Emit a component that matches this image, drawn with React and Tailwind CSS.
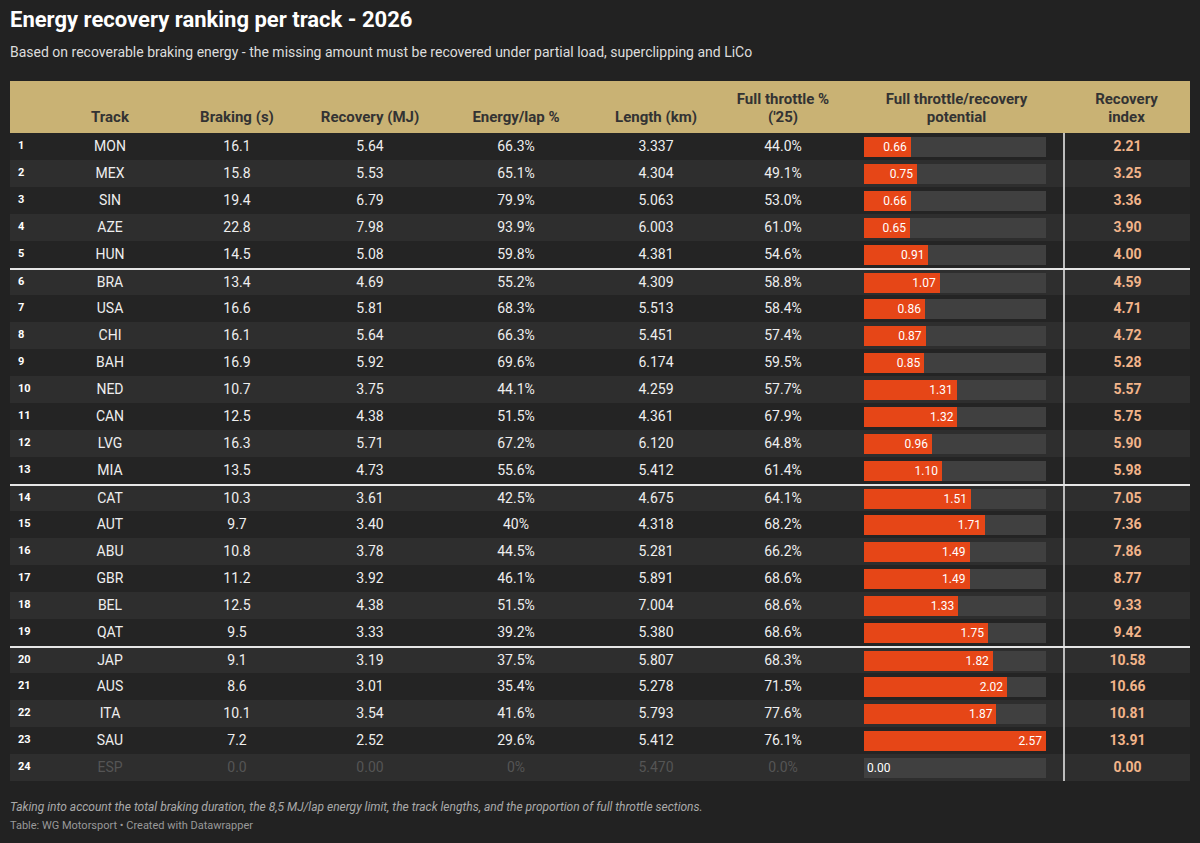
import React from "react";

const rows = [
  [1, "MON", "16.1", "5.64", "66.3%", "3.337", "44.0%", 0.66, "2.21"],
  [2, "MEX", "15.8", "5.53", "65.1%", "4.304", "49.1%", 0.75, "3.25"],
  [3, "SIN", "19.4", "6.79", "79.9%", "5.063", "53.0%", 0.66, "3.36"],
  [4, "AZE", "22.8", "7.98", "93.9%", "6.003", "61.0%", 0.65, "3.90"],
  [5, "HUN", "14.5", "5.08", "59.8%", "4.381", "54.6%", 0.91, "4.00"],
  [6, "BRA", "13.4", "4.69", "55.2%", "4.309", "58.8%", 1.07, "4.59"],
  [7, "USA", "16.6", "5.81", "68.3%", "5.513", "58.4%", 0.86, "4.71"],
  [8, "CHI", "16.1", "5.64", "66.3%", "5.451", "57.4%", 0.87, "4.72"],
  [9, "BAH", "16.9", "5.92", "69.6%", "6.174", "59.5%", 0.85, "5.28"],
  [10, "NED", "10.7", "3.75", "44.1%", "4.259", "57.7%", 1.31, "5.57"],
  [11, "CAN", "12.5", "4.38", "51.5%", "4.361", "67.9%", 1.32, "5.75"],
  [12, "LVG", "16.3", "5.71", "67.2%", "6.120", "64.8%", 0.96, "5.90"],
  [13, "MIA", "13.5", "4.73", "55.6%", "5.412", "61.4%", 1.1, "5.98"],
  [14, "CAT", "10.3", "3.61", "42.5%", "4.675", "64.1%", 1.51, "7.05"],
  [15, "AUT", "9.7", "3.40", "40%", "4.318", "68.2%", 1.71, "7.36"],
  [16, "ABU", "10.8", "3.78", "44.5%", "5.281", "66.2%", 1.49, "7.86"],
  [17, "GBR", "11.2", "3.92", "46.1%", "5.891", "68.6%", 1.49, "8.77"],
  [18, "BEL", "12.5", "4.38", "51.5%", "7.004", "68.6%", 1.33, "9.33"],
  [19, "QAT", "9.5", "3.33", "39.2%", "5.380", "68.6%", 1.75, "9.42"],
  [20, "JAP", "9.1", "3.19", "37.5%", "5.807", "68.3%", 1.82, "10.58"],
  [21, "AUS", "8.6", "3.01", "35.4%", "5.278", "71.5%", 2.02, "10.66"],
  [22, "ITA", "10.1", "3.54", "41.6%", "5.793", "77.6%", 1.87, "10.81"],
  [23, "SAU", "7.2", "2.52", "29.6%", "5.412", "76.1%", 2.57, "13.91"],
  [24, "ESP", "0.0", "0.00", "0%", "5.470", "0.0%", 0, "0.00"],
];

const grid =
  "grid grid-cols-[40px_120px_134px_132px_160px_120px_134px_213px_127px]";

function Row({ r }) {
  const [rank, track, brake, rec, energy, len, ft, pot, idx] = r;
  const odd = rank % 2 === 1;
  const sep = rank === 6 || rank === 14 || rank === 20;
  const dim = rank === 24;
  const txt = dim ? "text-[#555555]" : "text-[#eeeeee]";
  const w = (pot / 2.57) * 182;
  return (
    <div
      className={`${grid} h-[27px] items-stretch text-[14px] ${
        odd ? "bg-[#242424]" : "bg-[#2e2e2e]"
      } ${sep ? "border-t-2 border-[#e6e6e6]" : ""}`}
    >
      <div className="flex items-center pl-[8px] text-[11px] font-bold text-white">
        {rank}
      </div>
      <div className={`flex items-center justify-center ${txt}`}>{track}</div>
      <div className={`flex items-center justify-center ${txt}`}>{brake}</div>
      <div className={`flex items-center justify-center ${txt}`}>{rec}</div>
      <div className={`flex items-center justify-center ${txt}`}>{energy}</div>
      <div className={`flex items-center justify-center ${txt}`}>{len}</div>
      <div className={`flex items-center justify-center ${txt}`}>{ft}</div>
      <div className="flex items-center pl-[14px]">
        <div className="relative h-[20px] w-[182px] bg-[#404040]">
          {pot > 0 ? (
            <div
              className="flex h-full items-center justify-end bg-[#e64617] pr-[4px] text-[12px] text-white"
              style={{ width: `${w}px` }}
            >
              {pot.toFixed(2)}
            </div>
          ) : (
            <div className="flex h-full items-center pl-[3px] text-[12px] text-white">
              0.00
            </div>
          )}
        </div>
      </div>
      <div className="flex items-center justify-center border-l-2 border-[#bdbdbd] text-[14px] font-bold text-[#f2b48a]">
        {idx}
      </div>
    </div>
  );
}

export default function App() {
  return (
    <div
      className="min-h-[843px] w-[1200px] bg-[#222222] px-[10px] pt-[6px]"
      style={{ fontFamily: "Roboto, 'Liberation Sans', sans-serif" }}
    >
      <h1 className="text-[22px] font-bold leading-[28px] text-white">
        Energy recovery ranking per track - 2026
      </h1>
      <p className="mt-[8px] text-[14px] leading-[20px] text-[#dddddd]">
        Based on recoverable braking energy - the missing amount must be recovered
        under partial load, superclipping and LiCo
      </p>
      <div className="mt-[19px]">
        <div
          className={`${grid} h-[52px] items-end bg-[#c9b274] pb-[7px] text-[15px] font-bold leading-[18px] text-[#333333]`}
        >
          <div></div>
          <div className="text-center">Track</div>
          <div className="text-center">Braking (s)</div>
          <div className="text-center">Recovery (MJ)</div>
          <div className="text-center">Energy/lap %</div>
          <div className="text-center">Length (km)</div>
          <div className="text-center">
            Full throttle %
            <br />
            ('25)
          </div>
          <div className="text-center">
            Full throttle/recovery
            <br />
            potential
          </div>
          <div className="text-center">
            Recovery
            <br />
            index
          </div>
        </div>
        {rows.map((r) => (
          <Row key={r[0]} r={r} />
        ))}
      </div>
      <p className="mt-[18px] text-[12px] italic leading-[16px] text-[#aaaaaa]">
        Taking into account the total braking duration, the 8,5 MJ/lap energy limit,
        the track lengths, and the proportion of full throttle sections.
      </p>
      <p className="mt-[3px] text-[11px] leading-[16px] text-[#999999]">
        Table: WG Motorsport • Created with Datawrapper
      </p>
    </div>
  );
}
